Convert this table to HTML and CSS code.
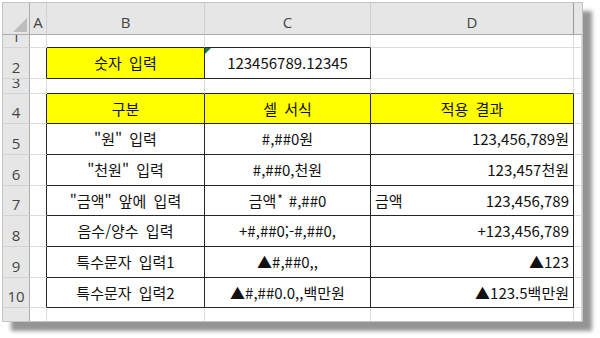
FILE: index.html
```html
<!DOCTYPE html>
<html lang="ko">
<head>
<meta charset="utf-8">
<link rel="stylesheet" href="styles.css">
</head>
<body>
<div class="frame">
  <div class="sheet">
    <!-- header row -->
    <div class="corner"><span class="corner-tri"></span></div>
    <div class="colh">A</div>
    <div class="colh">B</div>
    <div class="colh">C</div>
    <div class="colh colh-break">D</div>
    <div class="colh colh-last"></div>

    <!-- row 1 -->
    <div class="rowh"><span>1</span></div>
    <div class="c"></div>
    <div class="c tt"></div>
    <div class="c tt"></div>
    <div class="c"></div>
    <div class="c"></div>

    <!-- row 2 -->
    <div class="rowh"><span>2</span></div>
    <div class="c tl"></div>
    <div class="c t y ctr">숫자 입력</div>
    <div class="c t ctr flag">123456789.12345<span class="err"></span></div>
    <div class="c"></div>
    <div class="c"></div>

    <!-- row 3 -->
    <div class="rowh"><span>3</span></div>
    <div class="c"></div>
    <div class="c tt"></div>
    <div class="c tt"></div>
    <div class="c tt"></div>
    <div class="c"></div>

    <!-- row 4 -->
    <div class="rowh"><span>4</span></div>
    <div class="c tl"></div>
    <div class="c t y ctr">구분</div>
    <div class="c t y ctr">셀 서식</div>
    <div class="c t y ctr">적용 결과</div>
    <div class="c"></div>

    <!-- row 5 -->
    <div class="rowh"><span>5</span></div>
    <div class="c tl"></div>
    <div class="c t ctr">"원" 입력</div>
    <div class="c t ctr">#,##0원</div>
    <div class="c t rgt">123,456,789원</div>
    <div class="c"></div>

    <!-- row 6 -->
    <div class="rowh"><span>6</span></div>
    <div class="c tl"></div>
    <div class="c t ctr">"천원" 입력</div>
    <div class="c t ctr">#,##0,천원</div>
    <div class="c t rgt">123,457천원</div>
    <div class="c"></div>

    <!-- row 7 -->
    <div class="rowh"><span>7</span></div>
    <div class="c tl"></div>
    <div class="c t ctr">"금액" 앞에 입력</div>
    <div class="c t ctr">금액<span class="ast">*</span>#,##0</div>
    <div class="c t spread"><span>금액</span><span>123,456,789</span></div>
    <div class="c"></div>

    <!-- row 8 -->
    <div class="rowh"><span>8</span></div>
    <div class="c tl"></div>
    <div class="c t ctr">음수/양수 입력</div>
    <div class="c t ctr">+#,##0;-#,##0,</div>
    <div class="c t rgt">+123,456,789</div>
    <div class="c"></div>

    <!-- row 9 -->
    <div class="rowh"><span>9</span></div>
    <div class="c tl"></div>
    <div class="c t ctr">특수문자 입력1</div>
    <div class="c t ctr">▲#,##0,,</div>
    <div class="c t rgt">▲123</div>
    <div class="c"></div>

    <!-- row 10 -->
    <div class="rowh"><span>10</span></div>
    <div class="c tl"></div>
    <div class="c t ctr">특수문자 입력2</div>
    <div class="c t ctr">▲#,##0.0,,백만원</div>
    <div class="c t rgt">▲123.5백만원</div>
    <div class="c"></div>

    <!-- row 11 -->
    <div class="rowh"><span>11</span></div>
    <div class="c"></div>
    <div class="c"></div>
    <div class="c"></div>
    <div class="c"></div>
    <div class="c"></div>
  </div>
</div>
</body>
</html>
```

FILE: styles.css
```css
html, body {
  margin: 0;
  padding: 0;
  background: #ffffff;
}

body {
  width: 600px;
  height: 338px;
  overflow: hidden;
}

.frame {
  margin: 2px 0 0 2px;
  width: 579px;
  height: 318px;
  border: 1px solid #c4c4c4;
  background: #ffffff;
  box-shadow: 9px 9px 4px rgba(0, 0, 0, 0.42);
  overflow: hidden;
}

.sheet {
  display: grid;
  grid-template-columns: 27px 17px 158px 166px 203px 1fr;
  grid-template-rows: 32px 13px 31px 15px 30px 31px 31px 30px 31px 31px 30px 30px;
  font-family: "Noto Sans CJK KR", "Noto Sans", sans-serif;
  font-size: 15px;
  word-spacing: 3px;
  color: #111111;
}

.sheet > div {
  box-sizing: border-box;
  min-width: 0;
  overflow: hidden;
}

/* header cells */
.corner {
  position: relative;
  background: #e6e6e6;
  border-right: 1px solid #ababab;
  border-bottom: 1px solid #ababab;
}

.corner-tri {
  position: absolute;
  right: 2px;
  bottom: 2px;
  width: 0;
  height: 0;
  border-left: 14px solid transparent;
  border-bottom: 14px solid #bdbdbd;
}

.colh {
  display: flex;
  align-items: flex-end;
  justify-content: center;
  padding-bottom: 4px;
  background: #e6e6e6;
  border-right: 1px solid #d0d0d0;
  border-bottom: 1px solid #ababab;
  font-family: "Open Sans", "Noto Sans", sans-serif;
  font-size: 15px;
  line-height: 15px;
  color: #444444;
}

.colh-break {
  border-right-color: #9a9a9a;
}

.colh-last {
  border-right: none;
}

.rowh {
  display: flex;
  align-items: flex-end;
  justify-content: center;
  padding-bottom: 3px;
  background: #e6e6e6;
  border-right: 1px solid #ababab;
  border-bottom: 1px solid #d4d4d4;
  font-family: "Open Sans", "Noto Sans", sans-serif;
  font-size: 15px;
  line-height: 15px;
  word-spacing: 0;
  color: #444444;
}

.rowh span {
  flex: none;
}

/* grid cells */
.c {
  border-right: 1px solid #dcdcdc;
  border-bottom: 1px solid #dcdcdc;
  line-height: 16px;
  white-space: nowrap;
}

.t {
  border-right-color: #262626;
  border-bottom-color: #262626;
}

.tl {
  border-right-color: #262626;
}

.tt {
  border-bottom-color: #262626;
}

.y {
  background: #ffff00;
}

.ctr {
  display: flex;
  align-items: center;
  justify-content: center;
}

.rgt {
  display: flex;
  align-items: center;
  justify-content: flex-end;
  padding-right: 4px;
}

.spread {
  display: flex;
  align-items: center;
  justify-content: space-between;
  padding: 0 4px;
}

.ast {
  font-size: 12px;
  position: relative;
  top: -2px;
  margin-left: 1px;
  margin-right: 6px;
}

.flag {
  position: relative;
}

.err {
  position: absolute;
  left: 0;
  top: 0;
  width: 0;
  height: 0;
  border-top: 6px solid #1d7a3e;
  border-right: 6px solid transparent;
}
```
